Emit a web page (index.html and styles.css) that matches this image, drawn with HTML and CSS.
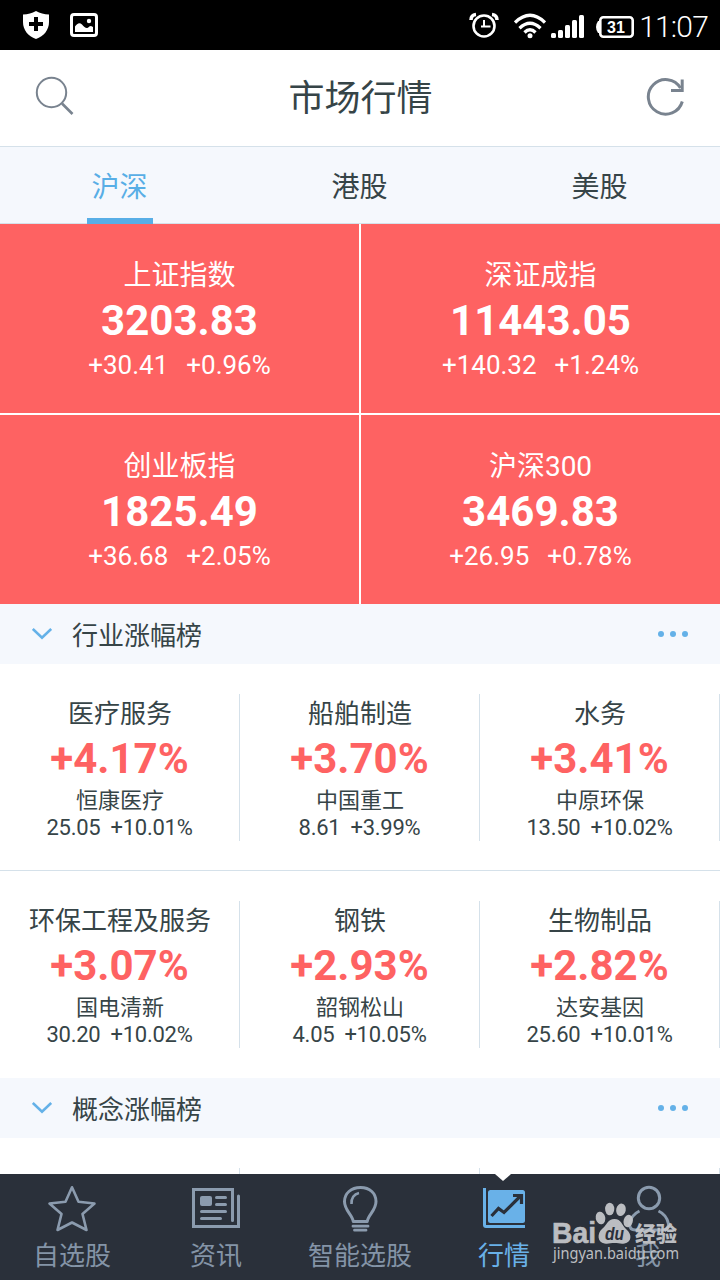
FILE: index.html
```html
<!doctype html>
<html lang="zh-CN">

<head>
    <meta charset="utf-8">
    <title>市场行情</title>
    <link rel="stylesheet" href="styles.css">
</head>

<body>
    <div class="screen">
        <div class="status">
            <svg class="shield" width="26" height="28" viewBox="0 0 26 28">
                <path d="M13 0C9 2.500 5 3.300 0 3.500V11c0 8 5 14 13 17 8-3 13-9 13-17V3.500C21 3.300 17 2.500 13 0z" fill="#fff" />
                <path d="M13 6v14M6 13h14" stroke="#000" stroke-width="4" />
            </svg>
            <svg class="photo" width="28" height="24" viewBox="0 0 28 24">
                <rect x="1.500" y="1.500" width="25" height="21" rx="2.500" fill="none" stroke="#fff" stroke-width="3" />
                <path d="M5 19v-5.500c2-3 4.500-4.500 7-2 2 2 3 3.500 5 3.500 1.500 0 2-2 4-2l2 1V19z" fill="#fff" />
                <circle cx="19" cy="8" r="2.200" fill="#fff" />
            </svg>
            <div class="status-right">
                <svg class="alarm" width="30" height="26" viewBox="0 0 30 26" fill="none" stroke="#fff">
                    <circle cx="15" cy="14" r="10.500" stroke-width="2.600" />
                    <path d="M15 8v7M12 14.500h9.500" stroke-width="2" />
                    <path d="M2 8Q2 3 7 2.500M28 8Q28 3 23 2.500" stroke-width="3.500" />
                </svg>
                <svg class="wifi" width="32" height="26" viewBox="0 0 32 26" fill="none" stroke="#fff" stroke-width="3.300">
                    <path d="M1 9.500Q16-5 31 9.500M5.500 15.200q10.500-10 21 0M10.500 19.500q5.500-5.500 11 0" />
                    <circle cx="16" cy="22.800" r="2.500" fill="#fff" stroke="none" />
                </svg>
                <svg class="signal" width="33" height="24" viewBox="0 0 33 24" fill="#fff">
                    <rect x="0" y="18" width="5" height="5" rx="1.500" />
                    <rect x="7" y="15" width="5" height="8" rx="1.500" />
                    <rect x="14" y="10" width="5" height="13" rx="1.500" />
                    <rect x="21" y="5" width="5" height="18" rx="1.500" />
                    <rect x="28" y="0" width="5" height="23" rx="1.500" />
                </svg>
                <svg class="battery" width="38" height="22" viewBox="0 0 38 22">
                    <rect x="4.300" y="1.300" width="32.400" height="19.400" rx="3" fill="none" stroke="#fff" stroke-width="2.600" />
                    <path d="M5 5H2Q0 8 0 11t2 6h3z" fill="#fff" />
                    <text x="20" y="16.800" text-anchor="middle" class="battery-text">31</text>
                </svg>
                <span class="clock">11:07</span>
            </div>
        </div>

        <div class="header">
            <svg width="40" height="40" viewBox="0 0 40 40" fill="none" stroke="#79838f" stroke-width="2">
                <circle cx="16.500" cy="16.500" r="14.700" />
                <path d="M27 27.500l10.500 10.500" stroke-width="2.600" />
            </svg>
            <h1>市场行情</h1>
            <svg width="40" height="40" viewBox="0 0 40 40" fill="none" stroke="#79838f" stroke-width="3">
                <path d="M36.300 25.500A17.300 17.300 0 1 1 34.500 12" />
                <path d="M36.200 3.500v11H25" />
            </svg>
        </div>

        <div class="tabs">
            <div class="tab active"><span>沪深</span></div>
            <div class="tab"><span>港股</span></div>
            <div class="tab"><span>美股</span></div>
        </div>

        <div class="content">
            <div class="indexes">
                <div class="index">
                    <div class="index-name">上证指数</div>
                    <div class="index-value">3203.83</div>
                    <div class="index-change"><span>+30.41</span><span>+0.96%</span></div>
                </div>
                <div class="index">
                    <div class="index-name">深证成指</div>
                    <div class="index-value">11443.05</div>
                    <div class="index-change"><span>+140.32</span><span>+1.24%</span></div>
                </div>
                <div class="index">
                    <div class="index-name">创业板指</div>
                    <div class="index-value">1825.49</div>
                    <div class="index-change"><span>+36.68</span><span>+2.05%</span></div>
                </div>
                <div class="index">
                    <div class="index-name">沪深300</div>
                    <div class="index-value">3469.83</div>
                    <div class="index-change"><span>+26.95</span><span>+0.78%</span></div>
                </div>
            </div>

            <div class="section">
                <svg width="20" height="12" viewBox="0 0 20 12" fill="none" stroke="#64b1e8" stroke-width="2.600">
                    <path d="M.800 1L10 9.800 19.200 1" />
                </svg>
                <h2>行业涨幅榜</h2>
                <div class="more"><i></i><i></i><i></i></div>
            </div>
            <div class="row line">
                <div class="item">
                    <div class="item-name">医疗服务</div>
                    <div class="item-rate">+4.17%</div>
                    <div class="stock">恒康医疗</div>
                    <div class="price"><span>25.05</span><span>+10.01%</span></div>
                </div>
                <div class="item">
                    <div class="item-name">船舶制造</div>
                    <div class="item-rate">+3.70%</div>
                    <div class="stock">中国重工</div>
                    <div class="price"><span>8.61</span><span>+3.99%</span></div>
                </div>
                <div class="item">
                    <div class="item-name">水务</div>
                    <div class="item-rate">+3.41%</div>
                    <div class="stock">中原环保</div>
                    <div class="price"><span>13.50</span><span>+10.02%</span></div>
                </div>
            </div>
            <div class="row">
                <div class="item">
                    <div class="item-name">环保工程及服务</div>
                    <div class="item-rate">+3.07%</div>
                    <div class="stock">国电清新</div>
                    <div class="price"><span>30.20</span><span>+10.02%</span></div>
                </div>
                <div class="item">
                    <div class="item-name">钢铁</div>
                    <div class="item-rate">+2.93%</div>
                    <div class="stock">韶钢松山</div>
                    <div class="price"><span>4.05</span><span>+10.05%</span></div>
                </div>
                <div class="item">
                    <div class="item-name">生物制品</div>
                    <div class="item-rate">+2.82%</div>
                    <div class="stock">达安基因</div>
                    <div class="price"><span>25.60</span><span>+10.01%</span></div>
                </div>
            </div>

            <div class="section">
                <svg width="20" height="12" viewBox="0 0 20 12" fill="none" stroke="#64b1e8" stroke-width="2.600">
                    <path d="M.800 1L10 9.800 19.200 1" />
                </svg>
                <h2>概念涨幅榜</h2>
                <div class="more"><i></i><i></i><i></i></div>
            </div>
            <div class="row">
                <div class="item"></div>
                <div class="item"></div>
                <div class="item"></div>
            </div>
        </div>

        <div class="nav">
            <div class="nav-item">
                <svg width="50" height="48" viewBox="0 0 50 48" fill="none" stroke="#8b9bae" stroke-width="2.600" stroke-linejoin="round">
                    <path d="M25 3.300L31.500 17.800 47.500 19.500 35.500 30 39.500 46 25 38.500 10.500 46 14.500 30 2.500 19.500 18.500 17.800z" />
                </svg>
                <span>自选股</span>
            </div>
            <div class="nav-item">
                <svg width="50" height="48" viewBox="0 0 50 48" fill="none" stroke="#8b9bae" stroke-width="3" stroke-linecap="round">
                    <path d="M41.500 36.500V5.500h-39v37h45V12" />
                    <rect x="9" y="12" width="12" height="10" rx="2" fill="#8b9bae" stroke="none" />
                    <path d="M25.500 13.500h9M25.500 20.500h9M10.500 27.500h24M10.500 34.500h19" />
                </svg>
                <span>资讯</span>
            </div>
            <div class="nav-item">
                <svg width="50" height="48" viewBox="0 0 50 48" fill="none" stroke="#8b9bae" stroke-width="3">
                    <path d="M18.300 37.500c-1-7-8.800-11-8.800-20C9.500 9.500 16 3.500 25.500 3.500S41 9.500 41 17.500c0 9-7.800 13-8.800 20z" stroke-linejoin="round" />
                    <path d="M16.500 20C16 14.500 19 10 24 9" stroke-width="2.600" />
                    <path d="M18 42.200h15M19.500 46.200h11.500" stroke-width="2.800" stroke-linecap="round" />
                </svg>
                <span>智能选股</span>
            </div>
            <div class="nav-item active">
                <svg width="50" height="48" viewBox="0 0 50 48" fill="none">
                    <path d="M5.500 4v37q0 1.500 1.500 1.500h39" stroke="#69b1e8" stroke-width="3" />
                    <rect x="9" y="6" width="37" height="33" rx="2.500" fill="#69b1e8" />
                    <path d="M12.500 32l7-7.500 5.500 4L41.500 12M34 11.500h8.500V20" stroke="#2a303a" stroke-width="3.200" />
                </svg>
                <span>行情</span>
            </div>
            <div class="nav-item">
                <svg width="50" height="48" viewBox="0 0 50 48" fill="none" stroke="#8b9bae" stroke-width="3">
                    <circle cx="26" cy="14" r="10.700" />
                    <path d="M16.500 27Q8 31 6.500 40q0 6 6 6h27q6 0 6-6Q44 31 35.500 27" />
                </svg>
                <span>我</span>
            </div>
            <div class="watermark">
                <svg width="136" height="68" viewBox="0 0 136 68" fill="#c3c5c9">
                    <text x="2" y="42" class="wm-bai" textLength="44" lengthAdjust="spacingAndGlyphs">Bai</text>
                    <ellipse cx="50.500" cy="17" rx="4.800" ry="6.300" transform="rotate(-12 50.500 17)" />
                    <ellipse cx="59.700" cy="8" rx="4.600" ry="6.300" />
                    <ellipse cx="71" cy="8.800" rx="4.800" ry="6.300" transform="rotate(12 71 8.800)" />
                    <ellipse cx="78.200" cy="20" rx="4.600" ry="6.300" transform="rotate(15 78.200 20)" />
                    <path d="M64.500 18c-7 0-7 5.500-12 9.500-6 5-5 14 2 15 4 .700 6-.500 10-.500s6 1.200 10 .500c7-1 8-9 2-14-5-4.500-5-10.500-12-10.500z" />
                    <text x="55" y="38.500" class="wm-du" textLength="19" lengthAdjust="spacingAndGlyphs">du</text>
                    <text x="85" y="39.500" class="wm-cn" textLength="42">经验</text>
                    <text x="3" y="58" class="wm-url" textLength="126" lengthAdjust="spacingAndGlyphs">jingyan.baidu.com</text>
                </svg>
            </div>
        </div>
    </div>
</body>

</html>
```
FILE: styles.css
```css
body,
html {
    margin: 0;
    padding: 0;
    font-family: Roboto, "Noto Sans CJK SC", sans-serif;
    color: #364447;
}

h1,
h2 {
    margin: 0;
    font-weight: normal;
}

svg {
    display: block;
    flex: none;
}

.screen {
    display: flex;
    flex-direction: column;
    width: 720px;
    height: 1280px;
    overflow: hidden;
    background-color: #fff;
}

.status {
    display: flex;
    align-items: center;
    box-sizing: border-box;
    height: 50px;
    flex: none;
    padding: 0 12px 0 23px;
    background-color: #000;
    color: #fff;
}

.photo {
    margin-left: 21px;
}

.status-right {
    display: flex;
    align-items: center;
    margin-left: auto;
}

.wifi {
    margin: 2px 0 0 15px;
}

.signal {
    margin: 3px 0 0 5px;
}

.battery {
    margin: 4px 5px 0 12px;
}

.battery-text {
    font: bold 16px "Liberation Sans", sans-serif;
    fill: #fff;
}

.clock {
    font-size: 30px;
    font-weight: 300;
    line-height: 50px;
    letter-spacing: -0.8px;
    padding-top: 3px;
}

.header {
    display: flex;
    align-items: center;
    justify-content: space-between;
    box-sizing: border-box;
    height: 97px;
    flex: none;
    padding: 0 34px 4px 35px;
    border-bottom: 1px solid #d5e1ea;
}

.header h1 {
    font-size: 36px;
    line-height: 92px;
    padding-top: 6px;
}

.tabs {
    display: flex;
    height: 76px;
    flex: none;
    border-bottom: 1px solid #d5e1ea;
    background-color: #f5f8fd;
}

.tab {
    flex: 1;
    text-align: center;
    font-size: 28px;
    line-height: 82px;
}

.tab span {
    display: inline-block;
    box-sizing: border-box;
    width: 66px;
    height: 77px;
    text-indent: -1px;
}

.tab.active span {
    color: #58aee6;
    border-bottom: 6px solid #58aee6;
}

.content {
    flex: 1;
    min-height: 0;
    overflow: hidden;
}

.indexes {
    display: grid;
    grid-template-columns: 1fr 1fr;
    gap: 2px;
}

.index {
    box-sizing: border-box;
    height: 189px;
    padding-top: 31px;
    background-color: #fe6262;
    color: #fff;
    text-align: center;
}

.index-name {
    font-size: 28px;
    line-height: 42px;
}

.index-value {
    font-size: 42px;
    font-weight: bold;
    line-height: 47px;
}

.index-change {
    display: flex;
    justify-content: center;
    gap: 18px;
    font-size: 26px;
    line-height: 43px;
}

.section {
    display: flex;
    align-items: center;
    height: 60px;
    padding: 0 32px;
    background-color: #f5f8fd;
}

.section h2 {
    margin-left: 20px;
    padding-top: 4px;
    font-size: 26px;
    line-height: 56px;
}

.more {
    display: flex;
    gap: 6px;
    margin-left: auto;
}

.more i {
    width: 6px;
    height: 6px;
    border-radius: 50%;
    background-color: #64b1e8;
}

.row {
    display: flex;
    padding: 30px 0;
}

.row.line {
    padding-bottom: 29px;
    border-bottom: 1px solid #d5e1ea;
}

.item {
    flex: 1;
    box-sizing: border-box;
    height: 147px;
    border-right: 1px solid #d5e1ea;
    text-align: center;
}

.item-name {
    font-size: 26px;
    line-height: 40px;
    text-indent: 1px;
}

.item-rate {
    font-size: 42px;
    font-weight: bold;
    line-height: 50px;
    color: #fe6262;
}

.stock {
    font-size: 22px;
    line-height: 34px;
    text-indent: 1px;
}

.price {
    display: flex;
    justify-content: center;
    gap: 10px;
    font-size: 22px;
    line-height: 20px;
    letter-spacing: -0.25px;
}

.nav {
    display: flex;
    position: relative;
    height: 106px;
    flex: none;
    background-color: #2a303a;
}

.nav-item {
    display: flex;
    flex-direction: column;
    align-items: center;
    flex: 1;
    box-sizing: border-box;
    padding-top: 10px;
    font-size: 26px;
    line-height: 48px;
    color: #8494a7;
}

.nav-item.active {
    position: relative;
    color: #69b1e8;
}

/* notch above the current item */
.nav-item.active::before {
    content: "";
    position: absolute;
    top: 0;
    left: 63px;
    border: 8px solid transparent;
    border-top: 7px solid #fff;
    border-bottom: none;
}

.watermark {
    position: absolute;
    left: 550px;
    top: 27px;
    opacity: 0.95;
}

.wm-bai {
    font: bold 29px "Liberation Sans", sans-serif;
    stroke: #c3c5c9;
    stroke-width: 0.6px;
}

.wm-du {
    font: italic bold 19px "Liberation Sans", sans-serif;
    fill: #2a303a;
}

.wm-cn {
    font: 900 21px "Noto Sans CJK SC", sans-serif;
}

.wm-url {
    font: 16px "Noto Sans", sans-serif;
}
```
